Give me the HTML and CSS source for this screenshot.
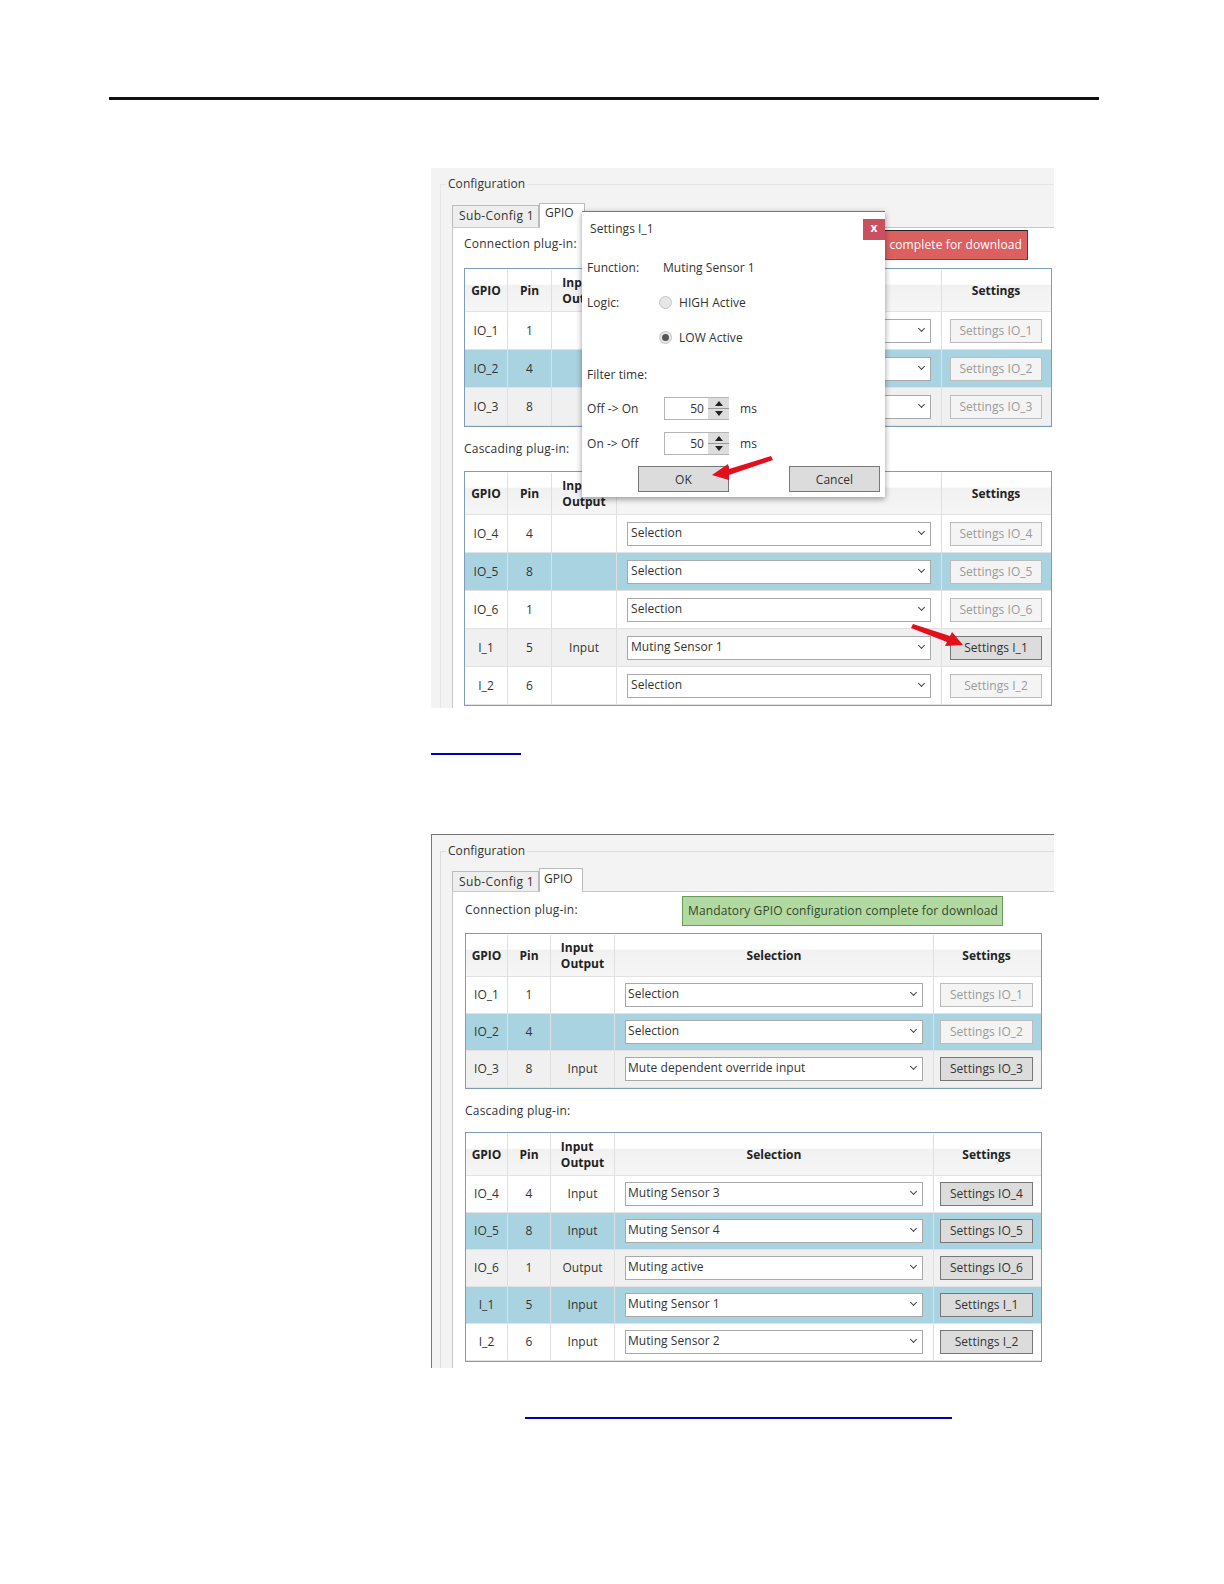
FILE: index.html
```html
<!DOCTYPE html>
<html lang="en">
<head>
<meta charset="utf-8">
<title>GPIO configuration</title>
<link rel="stylesheet" href="styles.css">
</head>
<body>
<main class="page">
<hr class="rule">

<section class="shot shot-a">
  <fieldset class="group">
    <legend>Configuration</legend>
    <div class="tabs">
      <div class="tab">Sub-Config 1</div>
      <div class="tab tab-on">GPIO</div>
    </div>
    <div class="pane">
      <div class="label-row">
        <span class="plug">Connection plug-in:</span>
        <div class="banner banner-red">complete for download</div>
      </div>
      <div class="tbl">
        <div class="row head"><div>GPIO</div><div>Pin</div><div><span class="io">Input<br>Output</span></div><div></div><div>Settings</div></div>
        <div class="row"><div>IO_1</div><div>1</div><div></div><div><div class="sel"></div></div><div><div class="btn off">Settings IO_1</div></div></div>
        <div class="row blue"><div>IO_2</div><div>4</div><div></div><div><div class="sel"></div></div><div><div class="btn off">Settings IO_2</div></div></div>
        <div class="row grey"><div>IO_3</div><div>8</div><div></div><div><div class="sel"></div></div><div><div class="btn off">Settings IO_3</div></div></div>
      </div>
      <div class="label-between"><span class="plug">Cascading plug-in:</span></div>
      <div class="tbl">
        <div class="row head"><div>GPIO</div><div>Pin</div><div><span class="io">Input<br>Output</span></div><div></div><div>Settings</div></div>
        <div class="row"><div>IO_4</div><div>4</div><div></div><div><div class="sel">Selection</div></div><div><div class="btn off">Settings IO_4</div></div></div>
        <div class="row blue"><div>IO_5</div><div>8</div><div></div><div><div class="sel">Selection</div></div><div><div class="btn off">Settings IO_5</div></div></div>
        <div class="row"><div>IO_6</div><div>1</div><div></div><div><div class="sel">Selection</div></div><div><div class="btn off">Settings IO_6</div></div></div>
        <div class="row grey"><div>I_1</div><div>5</div><div>Input</div><div><div class="sel">Muting Sensor 1</div></div><div><div class="btn">Settings I_1</div></div></div>
        <div class="row"><div>I_2</div><div>6</div><div></div><div><div class="sel">Selection</div></div><div><div class="btn off">Settings I_2</div></div></div>
      </div>
    </div>
  </fieldset>

  <div class="dialog">
    <div class="dlg-head"><span>Settings I_1</span><span class="close">x</span></div>
    <div class="dlg-row"><span>Function:</span><span>Muting Sensor 1</span></div>
    <div class="dlg-row"><span>Logic:</span><span class="opt"><i class="radio"></i>HIGH Active</span></div>
    <div class="dlg-row"><span></span><span class="opt"><i class="radio radio-on"></i>LOW Active</span></div>
    <div class="dlg-row dlg-filter"><span>Filter time:</span><span></span></div>
    <div class="dlg-row"><span>Off -&gt; On</span><span class="time"><span class="spin">50<i class="arrows"><b class="up"></b><b class="down"></b></i></span>ms</span></div>
    <div class="dlg-row"><span>On -&gt; Off</span><span class="time"><span class="spin">50<i class="arrows"><b class="up"></b><b class="down"></b></i></span>ms</span></div>
    <div class="dlg-btns"><div class="btn dlg-btn">OK</div><div class="btn dlg-btn">Cancel</div></div>
  </div>

  <svg class="marks" viewBox="0 0 623 540" aria-hidden="true">
    <path class="red" d="M340 288 L298 301 L297 296 L281 307 L298 312 L298 307 L342 292 Z"/>
    <path class="red" d="M482 456 L480 460 L516 474 L514 478 L532 477 L521 464 L519 468 Z"/>
  </svg>
</section>

<div class="link link-a"></div>

<section class="shot shot-b">
  <fieldset class="group">
    <legend>Configuration</legend>
    <div class="tabs">
      <div class="tab">Sub-Config 1</div>
      <div class="tab tab-on">GPIO</div>
    </div>
    <div class="pane">
      <div class="label-row">
        <span class="plug">Connection plug-in:</span>
        <div class="banner banner-green">Mandatory GPIO configuration complete for download</div>
      </div>
      <div class="tbl">
        <div class="row head"><div>GPIO</div><div>Pin</div><div><span class="io">Input<br>Output</span></div><div>Selection</div><div>Settings</div></div>
        <div class="row"><div>IO_1</div><div>1</div><div></div><div><div class="sel">Selection</div></div><div><div class="btn off">Settings IO_1</div></div></div>
        <div class="row blue"><div>IO_2</div><div>4</div><div></div><div><div class="sel">Selection</div></div><div><div class="btn off">Settings IO_2</div></div></div>
        <div class="row grey"><div>IO_3</div><div>8</div><div>Input</div><div><div class="sel">Mute dependent override input</div></div><div><div class="btn">Settings IO_3</div></div></div>
      </div>
      <div class="label-between"><span class="plug">Cascading plug-in:</span></div>
      <div class="tbl">
        <div class="row head"><div>GPIO</div><div>Pin</div><div><span class="io">Input<br>Output</span></div><div>Selection</div><div>Settings</div></div>
        <div class="row"><div>IO_4</div><div>4</div><div>Input</div><div><div class="sel">Muting Sensor 3</div></div><div><div class="btn">Settings IO_4</div></div></div>
        <div class="row blue"><div>IO_5</div><div>8</div><div>Input</div><div><div class="sel">Muting Sensor 4</div></div><div><div class="btn">Settings IO_5</div></div></div>
        <div class="row grey"><div>IO_6</div><div>1</div><div>Output</div><div><div class="sel">Muting active</div></div><div><div class="btn">Settings IO_6</div></div></div>
        <div class="row blue"><div>I_1</div><div>5</div><div>Input</div><div><div class="sel">Muting Sensor 1</div></div><div><div class="btn">Settings I_1</div></div></div>
        <div class="row"><div>I_2</div><div>6</div><div>Input</div><div><div class="sel">Muting Sensor 2</div></div><div><div class="btn">Settings I_2</div></div></div>
      </div>
    </div>
  </fieldset>
</section>

<div class="link link-b"></div>
</main>
</body>
</html>
```
FILE: styles.css
```css
* { box-sizing: border-box; }
html, body { margin: 0; background: #fff; }
.page {
  height: 1584px;
  padding-top: 97px;
  font: 12px/16px "Open Sans", "Liberation Sans", sans-serif;
  letter-spacing: .05px;
  color: #333;
}
.rule { margin: 0 125px 0 109px; height: 3px; border: 0; background: #111; }

/* screenshots */
.shot {
  position: relative;
  margin-left: 431px;
  width: 623px;
  overflow: hidden;
  background: #f3f3f3;
}
.shot-a {
  height: 540px;
  margin-top: 68px;
  --cols: 43px 44px 65px 325px 1fr;
  --row: 38px;
  --btn-l: 8px;
  --btn-r: 9px;
  --tbl-w: 588px;
  --gap: 44px;
  --pane-l: 11px;
  --plug-top: 8px;
  --banner-top: 2px;
  --label-h: 40px;
  --sel-pad: 3px;
}
.shot-b {
  height: 534px;
  margin-top: 79px;
  border-top: 1px solid #777;
  border-left: 1px solid #777;
  --cols: 42px 43px 64px 319px 1fr;
  --row: 37px;
  --btn-l: 6px;
  --btn-r: 8px;
  --tbl-w: 577px;
  --gap: 43px;
  --pane-l: 12px;
  --plug-top: 10px;
  --banner-top: 4px;
  --label-h: 41px;
  --sel-pad: 2px;
}

.group {
  margin: 7px -40px 0 9px;
  padding: 0;
  min-width: 0;
  border: 1px solid #e6e6e6;
}
.group legend { margin-left: 5px; padding: 0 2px; line-height: 18px; }
.shot-b .group { margin: 7px -40px 0 8px; border-color: #dcdcdc; }

.tabs { display: flex; align-items: flex-end; margin: 9px 0 0 11px; height: 25px; }
.shot-b .tabs { height: 23px; margin-top: 8px; }
.tab {
  width: 87px;
  height: 22px;
  padding-left: 6px;
  line-height: 19px;
  letter-spacing: .35px;
  background: #eee;
  border: 1px solid #bbb;
  border-bottom: 0;
}
.shot-b .tab { height: 20px; line-height: 20px; }
.tab-on {
  width: 46px;
  height: 25px;
  margin-bottom: -1px;
  padding-left: 5px;
  line-height: 18px;
  letter-spacing: 0;
  background: #fff;
}
.shot-b .tab-on { width: 44px; height: 24px; line-height: 19px; padding-left: 4px; }

.pane {
  margin-left: 11px;
  padding: 0 0 60px var(--pane-l);
  background: #fff;
  border: 1px solid #c8c8c8;
  border-right: 0;
}
.plug { letter-spacing: .22px; }
.label-row {
  display: flex;
  align-items: flex-start;
  justify-content: space-between;
  width: var(--tbl-w);
  height: var(--label-h);
  padding-right: 24px;
}
.label-row .plug { margin-top: var(--plug-top); }
.shot-b .label-row { padding-right: 39px; }
.banner {
  height: 30px;
  margin-top: var(--banner-top);
  padding: 0 5px;
  line-height: 28px;
  letter-spacing: .12px;
}
.banner-red {
  width: 240px;
  text-align: right;
  color: #fff;
  background: #dd6060;
  border-top: 1px solid #222;
  border-right: 1px solid #444;
  border-bottom: 1px solid #a33;
}
.banner-green {
  width: 321px;
  color: #2f4a28;
  background: #b3d9a3;
  border: 1px solid #6c9a5c;
}
.label-between { display: flex; align-items: center; height: var(--gap); }

/* tables */
.tbl {
  width: var(--tbl-w);
  background: #fff;
  border: 1px solid #7f9db9;
}
.row {
  display: grid;
  grid-template-columns: var(--cols);
  height: var(--row);
}
.row > div {
  display: flex;
  align-items: center;
  justify-content: center;
  border-right: 1px solid #dfdfdf;
  border-bottom: 1px solid #e2e2e2;
}
.row > div:last-child { border-right: 0; padding: 0 var(--btn-r) 0 var(--btn-l); }
.row > div:nth-child(4) { padding: 0 10px; }
.head {
  height: 43px;
  padding-top: 1px;
  font-weight: 700;
  letter-spacing: 0;
  color: #222;
  background: linear-gradient(#fff 0, #fff 35%, #f1f1f1 38%, #f6f6f6 100%);
}
.io { display: inline-block; text-align: left; }
.blue { background: #a9d3e1; }
.grey { background: #f0f0f0; }

.sel {
  position: relative;
  width: 100%;
  height: 24px;
  padding-left: var(--sel-pad);
  line-height: 19px;
  background: #fff;
  border: 1px solid #a9a9a9;
}
.sel::after {
  content: "";
  position: absolute;
  right: 6px;
  top: 6px;
  width: 4px;
  height: 4px;
  border-right: 1.5px solid #444;
  border-bottom: 1.5px solid #444;
  transform: rotate(45deg);
}
.btn {
  width: 100%;
  height: 24px;
  line-height: 22px;
  text-align: center;
  background: #dcdcdc;
  border: 1px solid #777;
}
.btn.off { color: #9a9a9a; background: #f4f4f4; border-color: #bcbcbc; }

.banner, .tab, .sel, .btn { white-space: nowrap; }

/* dialog */
.dialog {
  position: absolute;
  left: 151px;
  top: 43px;
  width: 303px;
  height: 286px;
  background: #fff;
  border-top: 1px solid #777;
  box-shadow: 0 2px 6px rgba(0, 0, 0, .4);
}
.dlg-head {
  display: flex;
  justify-content: space-between;
  height: 38px;
  padding: 6px 0 0 8px;
  line-height: 22px;
}
.close {
  width: 22px;
  height: 21px;
  margin-top: 1px;
  text-align: center;
  line-height: 18px;
  font-weight: 700;
  color: #fff;
  background: #c9505f;
}
.dlg-row {
  display: grid;
  grid-template-columns: 76px 1fr;
  align-items: center;
  height: 35px;
  padding-left: 5px;
}
.dlg-filter { margin: 2px 0 -1px; }
.opt { display: flex; align-items: center; gap: 7px; margin-left: -4px; }
.radio {
  position: relative;
  width: 13px;
  height: 13px;
  background: #e6e6e6;
  border: 1px solid #c4c4c4;
  border-radius: 50%;
}
.radio-on::after {
  content: "";
  position: absolute;
  inset: 2px;
  background: #555;
  border-radius: 50%;
}
.time { display: flex; align-items: center; gap: 11px; margin-left: 1px; }
.spin {
  display: flex;
  align-items: center;
  justify-content: flex-end;
  gap: 4px;
  width: 65px;
  height: 23px;
  border: 1px solid #b5b5b5;
  border-right: 0;
}
.arrows {
  display: flex;
  flex-direction: column;
  justify-content: space-between;
  align-items: center;
  width: 21px;
  height: 21px;
  padding: 3px 0;
  background: linear-gradient(#ddd 0 46%, #999 46% 54%, #ddd 54%);
}
.up, .down { width: 0; height: 0; border: 4px solid transparent; }
.up { border-top: 0; border-bottom: 5px solid #222; }
.down { border-bottom: 0; border-top: 5px solid #222; }
.dlg-btns { display: flex; justify-content: space-between; margin: 5px 5px 0 56px; }
.dlg-btn { width: 91px; height: 26px; line-height: 26px; }

.marks { position: absolute; inset: 0; width: 623px; height: 540px; }
.red { fill: #e3101c; }

.link { height: 2px; background: #0000b4; }
.link-a { width: 90px; margin: 45px 0 0 431px; }
.link-b { width: 427px; margin: 49px 0 0 525px; }
```
